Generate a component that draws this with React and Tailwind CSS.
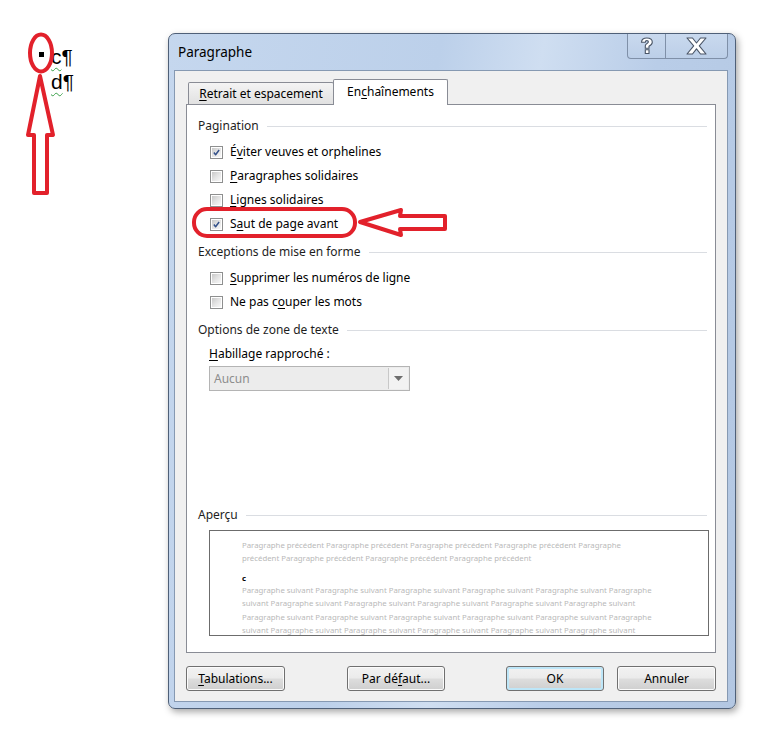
const SANS = "font-['Noto_Sans',sans-serif]";

const BTN =
  "h-[25px] rounded-[3px] border border-[#707070] bg-[linear-gradient(to_bottom,#f2f2f2_0%,#ebebeb_48%,#dddddd_52%,#cfcfcf_100%)] shadow-[inset_0_0_0_1px_#fbfbfb] flex items-center justify-center text-[12px] text-black";

function Mn({ children }) {
  // mnemonic letter (underlined access key)
  return <span className="underline underline-offset-[2px] decoration-1">{children}</span>;
}

function Checkbox({ checked }) {
  return (
    <span className="w-[13px] h-[13px] border border-[#8e8f8f] bg-white p-px flex shrink-0">
      <span className="flex-1 bg-gradient-to-br from-[#c9c9c9] via-[#e4e4e4] to-[#f8f8f8] relative">
        {checked && (
          <svg viewBox="0 0 11 11" className="absolute inset-0 w-full h-full">
            <path d="M2.3 5.6 L4.4 8.2 L8.7 2.4" fill="none" stroke="#34518a" strokeWidth="1.8" strokeLinejoin="round" />
          </svg>
        )}
      </span>
    </span>
  );
}

function Row({ checked, children }) {
  return (
    <div className="h-[24px] flex items-center gap-[7px] pl-[23px]">
      <Checkbox checked={checked} />
      <span className="text-[12px] text-black">{children}</span>
    </div>
  );
}

function Group({ title, className = "" }) {
  return (
    <div className={`h-[24px] flex items-center pl-[11px] pr-[8px] gap-[8px] ${className}`}>
      <span className="text-[12px] text-[#1e1e1e]">{title}</span>
      <span className="flex-1 h-px bg-[#dadde2]" />
    </div>
  );
}

const PREV_1 = [
  "Paragraphe précédent Paragraphe précédent Paragraphe précédent Paragraphe précédent Paragraphe",
  "précédent Paragraphe précédent Paragraphe précédent Paragraphe précédent",
];
const NEXT = [
  "Paragraphe suivant Paragraphe suivant Paragraphe suivant Paragraphe suivant Paragraphe suivant Paragraphe",
  "suivant Paragraphe suivant Paragraphe suivant Paragraphe suivant Paragraphe suivant Paragraphe suivant",
  "Paragraphe suivant Paragraphe suivant Paragraphe suivant Paragraphe suivant Paragraphe suivant Paragraphe",
  "suivant Paragraphe suivant Paragraphe suivant Paragraphe suivant Paragraphe suivant Paragraphe suivant",
];

export default function App() {
  return (
    <div className={`relative w-[761px] h-[732px] bg-white overflow-hidden ${SANS}`}>
      {/* document fragment on the left */}
      <div className="absolute left-[51px] top-[44px] font-['Liberation_Sans',Arial,sans-serif] text-[21px] leading-[25px] text-black">
        <div>
          <span className="underline decoration-wavy decoration-[#3aa04a] decoration-1 underline-offset-[3px]">c</span>¶
        </div>
        <div>
          <span className="underline decoration-wavy decoration-[#3aa04a] decoration-1 underline-offset-[3px]">d</span>¶
        </div>
      </div>
      <span className="absolute left-[39px] top-[52px] w-[5px] h-[5px] bg-black" />

      {/* dialog */}
      <div className="pt-[33px] pl-[168px]">
        <div className="w-[568px] h-[676px] rounded-[7px] border border-[#4f6078] bg-[linear-gradient(100deg,#c5d7ee_0%,#bcd0ea_40%,#cfdef1_55%,#b9cde8_72%,#b3c7e2_100%)] shadow-[2px_3px_7px_rgba(0,0,0,0.35)] flex flex-col pl-[5px] pr-[7px] pb-[6px]">
          {/* title bar */}
          <div className="h-[36px] flex items-start justify-between">
            <span className="pl-[4px] pt-[8px] text-[13.5px] text-black">Paragraphe</span>
            <div className="flex">
              <div className="w-[39px] h-[25px] border border-t-0 border-[#7f90a8] rounded-bl-[4px] bg-gradient-to-b from-[#c9d9ee] to-[#bccfe8] flex items-center justify-center">
                <svg width="16" height="18" viewBox="0 0 16 18">
                  <path
                    d="M2.5 5.2 C2.5 2.2 4.8 1 7.8 1 C11 1 13.3 2.6 13.3 5.2 C13.3 7.4 11.6 8.4 10 9.3 L10 11.3 L6.3 11.3 L6.3 8.8 C6.3 7.6 7.3 6.9 8.3 6.3 C9.3 5.7 9.4 5.2 9.4 4.8 C9.4 4 8.7 3.6 7.8 3.6 C6.8 3.6 6.3 4.2 6.3 5.2 Z M6.3 12.8 L10 12.8 L10 16.5 L6.3 16.5 Z"
                    fill="#fff"
                    stroke="#4a5566"
                    strokeWidth="1.1"
                  />
                </svg>
              </div>
              <div className="w-[62px] h-[25px] border border-t-0 border-l-0 border-[#7f90a8] rounded-br-[4px] bg-gradient-to-b from-[#c9d9ee] to-[#bccfe8] flex items-center justify-center">
                <svg width="21" height="18" viewBox="0 0 21 18">
                  <path
                    d="M1 1 L6.5 1 L10.5 6 L14.5 1 L20 1 L13.3 8.8 L20 17 L14.5 17 L10.5 11.8 L6.5 17 L1 17 L7.7 8.8 Z"
                    fill="#fff"
                    stroke="#4a5566"
                    strokeWidth="1.1"
                    strokeLinejoin="round"
                  />
                </svg>
              </div>
            </div>
          </div>

          {/* client area */}
          <div className="flex-1 bg-[#f0f0f0] border border-[#8699b2] flex flex-col px-[11px] pt-[8px]">
            {/* tabs */}
            <div className="h-[25px] flex items-end pl-[2px]">
              <div className="h-[22px] w-[146px] border border-b-0 border-[#898c95] rounded-t-[2px] bg-gradient-to-b from-[#f4f4f4] to-[#e1e1e1] flex items-center justify-center text-[12px] text-black">
                <span>
                  <Mn>R</Mn>etrait et espacement
                </span>
              </div>
              <div className="relative z-10 -ml-px -mb-px h-[26px] w-[115px] border border-b-0 border-[#898c95] rounded-t-[2px] bg-white flex items-center justify-center pb-[2px] text-[12px] text-black">
                <span>
                  En<Mn>c</Mn>haînements
                </span>
              </div>
            </div>

            {/* tab panel */}
            <div className="h-[549px] border border-[#898c95] bg-white pt-[9px]">
              <Group title="Pagination" />
              <div className="mt-[2px]">
                <Row checked>
                  É<Mn>v</Mn>iter veuves et orphelines
                </Row>
                <Row>
                  <Mn>P</Mn>aragraphes solidaires
                </Row>
                <Row>
                  <Mn>L</Mn>ignes solidaires
                </Row>
                <Row checked>
                  S<Mn>a</Mn>ut de page avant
                </Row>
              </div>

              <Group title="Exceptions de mise en forme" className="mt-[4px]" />
              <div className="mt-[2px]">
                <Row>
                  <Mn>S</Mn>upprimer les numéros de ligne
                </Row>
                <Row>
                  Ne pas c<Mn>o</Mn>uper les mots
                </Row>
              </div>

              <Group title="Options de zone de texte" className="mt-[4px]" />
              <div className="h-[24px] flex items-center pl-[22px] text-[12px] text-black">
                <span>
                  <Mn>H</Mn>abillage rapproché :
                </span>
              </div>
              <div className="ml-[22px] w-[201px] h-[25px] border border-[#b4b4b4] bg-[#ececec] flex items-center justify-between p-px">
                <span className="pl-[3px] text-[12px] text-[#8d8d8d]">Aucun</span>
                <span className="w-[20px] h-full border-l border-[#c8c8c8] bg-[#f2f2f2] flex items-center justify-center">
                  <svg width="9" height="5" viewBox="0 0 9 5">
                    <path d="M0 0 L9 0 L4.5 5 Z" fill="#6d6d6d" />
                  </svg>
                </span>
              </div>

              <Group title="Aperçu" className="mt-[112px]" />
              <div className="mt-[3px] ml-[22px] w-[500px] h-[106px] border border-[#6c6c6c] bg-white overflow-hidden pl-[32px] pt-[8px] text-[7.8px] leading-[13.4px] text-[#b9b9b9] whitespace-nowrap">
                {PREV_1.map((l) => (
                  <div key={l}>{l}</div>
                ))}
                <div className="mt-[6px] h-[12px] leading-[12px] font-bold text-black">c</div>
                {NEXT.map((l, i) => (
                  <div key={i}>{l}</div>
                ))}
              </div>
            </div>

            {/* bottom buttons */}
            <div className="mt-[13px] flex">
              <button className={`${BTN} w-[100px]`}>
                <span>
                  <Mn>T</Mn>abulations...
                </span>
              </button>
              <button className={`${BTN} w-[99px] ml-[62px]`}>
                <span>
                  Par dé<Mn>f</Mn>aut...
                </span>
              </button>
              <button className={`${BTN} w-[99px] ml-[61px] border-[#3c7fb1] shadow-[inset_0_0_0_2px_#bde6f8]`}>OK</button>
              <button className={`${BTN} w-[100px] ml-[13px]`}>Annuler</button>
            </div>
          </div>
        </div>
      </div>

      {/* red annotations */}
      <svg className="absolute inset-0 pointer-events-none" width="761" height="732" viewBox="0 0 761 732">
        <g fill="none" stroke="#e2212b" strokeWidth="4" strokeLinejoin="round">
          <ellipse cx="41" cy="53" rx="11" ry="18.5" />
          <path d="M40 76 L53 135 L47 135 L47 193 L34 193 L34 135 L28 135 Z" />
          <rect x="194" y="209" width="161" height="27" rx="13" />
          <path d="M360 222 L401 210 L400 216 L445 216 L445 229 L400 229 L401 235 Z" />
        </g>
      </svg>
    </div>
  );
}
